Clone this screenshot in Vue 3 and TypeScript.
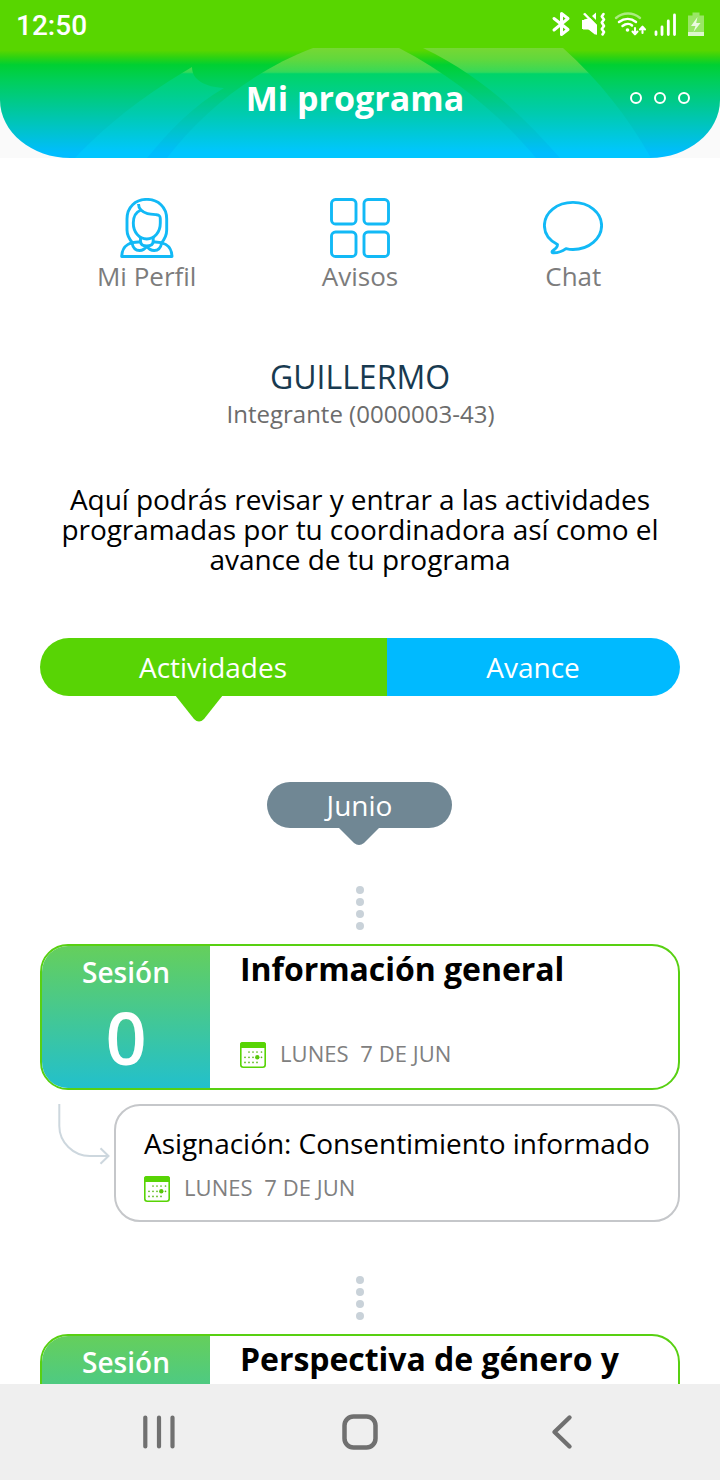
<script setup lang="ts">
interface Session { label: string; number: string; title: string; date: string; task?: string }

const sessions: Session[] = [
  { label: 'Sesión', number: '0', title: 'Información general', date: 'LUNES\u00a0 7 DE JUN', task: 'Asignación: Consentimiento informado' },
  { label: 'Sesión', number: '1', title: 'Perspectiva de género y', date: 'LUNES\u00a0 7 DE JUN' },
]
const dots = [0, 1, 2, 3]
const calendarDots = [
  [9, 10], [13, 10], [17, 10], [21.5, 10],
  [5, 15.3], [9, 15.3], [13, 15.3], [21.5, 15.3],
  [5, 20.4], [9, 20.4], [13, 20.4], [17, 20.4],
]
</script>

<template>
  <div class="screen">
    <header class="header">
      <svg class="header-art" width="720" height="158" viewBox="0 0 720 158">
        <defs>
          <linearGradient id="base" x1="0" y1="0" x2="0" y2="158" gradientUnits="userSpaceOnUse">
            <stop offset="0.32" stop-color="#58d600" />
            <stop offset="0.36" stop-color="#30d310" />
            <stop offset="0.41" stop-color="#00d032" />
            <stop offset="0.5" stop-color="#00cf56" />
            <stop offset="0.75" stop-color="#00c6b0" />
            <stop offset="0.97" stop-color="#00bdff" />
          </linearGradient>
          <linearGradient id="glow" x1="0" y1="48" x2="0" y2="158" gradientUnits="userSpaceOnUse">
            <stop offset="0" stop-color="#76d833" />
            <stop offset="0.1" stop-color="#62d83c" />
            <stop offset="0.2" stop-color="#3ed953" />
            <stop offset="0.22" stop-color="#30d95c" />
            <stop offset="0.235" stop-color="#00d468" />
            <stop offset="0.6" stop-color="#00cbb0" />
            <stop offset="0.95" stop-color="#00c6ff" />
          </linearGradient>
          <clipPath id="bar"><path d="M0 0H720V100C720 132 688 158 650 158H70C32 158 0 132 0 100Z" /></clipPath>
        </defs>
        <g clip-path="url(#bar)">
          <rect width="720" height="158" fill="url(#base)" />
          <path fill="url(#glow)" d="M75 158C112 119 150 92 192 67C192 80 205 87 224 88C193 106 170 130 147 158Z" />
          <path fill="url(#glow)" d="M167 158C202 112 254 70 313 48H399C455 77 502 117 536 158Z" />
          <path fill="url(#glow)" d="M423 48H563C599 80 628 117 651 158H560C518 110 477 74 423 48Z" />
        </g>
      </svg>
      <div class="status">
        <span class="clock">12:50</span>
        <svg class="status-icons" width="160" height="32" viewBox="550 8 160 32" fill="none" stroke="#fff" stroke-linecap="round" stroke-linejoin="round">
          <path stroke-width="3" d="M554 18.500L568 29.500L561.500 34.500V13.500L568 18.500L554 30" />
          <path fill="#fff" stroke="none" d="M582 20H586L595.500 29V35L588 29H582ZM583 14L585 12.800L597 25V28ZM592 16L596 12.500V20Z" />
          <path fill="#fff" stroke="none" d="M584 19.500L590 18L597 25V35L589 29.500H583Z" />
          <path stroke-width="2.600" d="M603.500 14L601.800 16.500L604 19.500L601.800 22.500L604 26L601.800 29L604 32L602.500 34.500" />
          <path stroke-width="2.4" stroke-opacity=".5" d="M616 18C623 12 633 12 640 18" />
          <path stroke-width="2.5" d="M619 22C624.500 18 631 18 636 22M622.500 26C626 23.500 630 23.500 632 25.500" />
          <circle cx="627.500" cy="30" r="1.800" fill="#fff" stroke="none" />
          <path stroke-width="2.100" d="M635 28V34M632.500 31.500L635 34.300L637.500 31.500M642.500 33V27M640 29.500L642.500 26.700L645 29.500" />
          <path stroke-width="2.800" d="M656 32V34.500M662 27V34.500M668.300 21V34.500M674.500 15V34.500" />
          <path fill="#fff" fill-opacity=".4" stroke="none" d="M692.500 12.500H699.500V15.500H704V32H688V15.500H692.500Z" />
          <path fill="#fff" fill-opacity=".8" stroke="none" d="M688 32H704V36H688ZM697.500 17L691 26H695.500L693.500 32L700.500 23H696.200Z" />
        </svg>
      </div>
      <div class="title-row">
        <h1>Mi programa</h1>
        <div class="more"><i v-for="n in 3" :key="n"></i></div>
      </div>
    </header>

    <main>
      <nav class="shortcuts">
        <a>
          <svg width="60" height="60" viewBox="0 0 60 60" fill="none" stroke="#12b9f6" stroke-width="2.900" stroke-linejoin="round">
            <path d="M16 45.500C12 41 10 37.500 10 32V21C10 9 18.500 1.400 29.800 1.400S49.700 9 49.700 21V32C49.700 37.500 48 41 44 45.500" />
            <path d="M24 12C19 14 16.300 18 16.300 25C16.300 34 22 41 29.800 41S43.300 34 43.300 25V21C43.300 18 42.500 17 39.500 16.700C33 16.200 28 16 24 12ZM24 12C22.500 10.500 21.500 9 21.500 6" />
            <path d="M23.500 39.500V43C23.500 46.500 26 48 29.800 48S36.200 46.500 36.200 43V39.500M23.500 44C15 43.500 5 46 4.700 58.500H55C54.700 46 44.700 43.500 36.200 44M15 45C16 50 19 52.500 22.500 52.500C25.500 52.500 28 51 29.800 48C31.600 51 34.200 52.500 37.200 52.500C40.700 52.500 43.700 50 44.700 45" />
          </svg>
          <span>Mi Perfil</span>
        </a>
        <a>
          <svg width="60" height="60" viewBox="0 0 60 60" fill="none" stroke="#12b9f6" stroke-width="2.900">
            <rect x="1.500" y="1.500" width="24.500" height="24.500" rx="4" /><rect x="34" y="1.500" width="24.500" height="24.500" rx="4" />
            <rect x="1.500" y="34" width="24.500" height="24.500" rx="4" /><rect x="34" y="34" width="24.500" height="24.500" rx="4" />
          </svg>
          <span>Avisos</span>
        </a>
        <a>
          <svg width="60" height="60" viewBox="0 0 60 60" fill="none" stroke="#12b9f6" stroke-width="2.900" stroke-linejoin="round">
            <path d="M14.500 46.500C6.500 42.500 1.400 35.500 1.400 27.500C1.400 14.500 14 4.400 30 4.400S58.600 14.500 58.600 27.500S46 51.500 30 51.500C27.500 51.500 25.500 51.200 23 50.600C19 53.500 14.500 55 10 54.800C8.500 54.700 9 53 10 52.500C12.500 51 14.500 49 14.500 46.500Z" />
          </svg>
          <span>Chat</span>
        </a>
      </nav>

      <h2>GUILLERMO</h2>
      <p class="member">Integrante (0000003-43)</p>
      <p class="intro">Aquí podrás revisar y entrar a las actividades<br>programadas por tu coordinadora así como el<br>avance de tu programa</p>

      <div class="tabs">
        <div class="tab active">Actividades
          <svg class="tab-pointer" width="48" height="27" viewBox="0 0 48 27"><path fill="#58d405" d="M0 0H48L29 24Q24 29 19 24Z" /></svg>
        </div>
        <div class="tab">Avance</div>
      </div>

      <div class="month">Junio
        <svg class="month-pointer" width="42" height="19" viewBox="0 0 42 19"><path fill="#708794" d="M0 0H42L26 16Q21 20 16 16Z" /></svg>
      </div>

      <section v-for="session in sessions" :key="session.number" class="session">
        <div class="dots"><i v-for="d in dots" :key="d"></i></div>
        <article class="card">
          <div class="badge">
            <span class="badge-label">{{ session.label }}</span>
            <span class="badge-number">{{ session.number }}</span>
          </div>
          <div class="info">
            <h3>{{ session.title }}</h3>
            <div class="date">
              <svg width="26" height="26" viewBox="0 0 26 26">
                <rect x=".8" y=".8" width="24.400" height="24.400" rx="2.500" fill="#fff" stroke="#58d405" stroke-width="1.600" />
                <path fill="#58d405" d="M0 6V2.500Q0 0 2.500 0H23.500Q26 0 26 2.500V6Z" />
                <circle v-for="(p, i) in calendarDots" :key="i" :cx="p[0]" :cy="p[1]" r=".85" fill="#58b816" />
                <circle cx="17.300" cy="15.300" r="2.200" fill="#58c80c" />
              </svg>
              <span>{{ session.date }}</span>
            </div>
          </div>
        </article>
        <div v-if="session.task" class="task-row">
          <svg class="branch" width="74" height="62" viewBox="0 0 74 62" fill="none" stroke="#cdd7de" stroke-width="2">
            <path d="M19.300 0V22C19.300 38 33 52 50 52H68M60.500 44.300L68.500 52L60.500 59.700" />
          </svg>
          <article class="task">
            <h4>{{ session.task }}</h4>
            <div class="date">
              <svg width="26" height="26" viewBox="0 0 26 26">
                <rect x=".8" y=".8" width="24.400" height="24.400" rx="2.500" fill="#fff" stroke="#58d405" stroke-width="1.600" />
                <path fill="#58d405" d="M0 6V2.500Q0 0 2.500 0H23.500Q26 0 26 2.500V6Z" />
                <circle v-for="(p, i) in calendarDots" :key="i" :cx="p[0]" :cy="p[1]" r=".85" fill="#58b816" />
                <circle cx="17.300" cy="15.300" r="2.200" fill="#58c80c" />
              </svg>
              <span>{{ session.date }}</span>
            </div>
          </article>
        </div>
      </section>
    </main>

    <footer class="system-nav">
      <svg width="720" height="96" viewBox="0 0 720 96" fill="none" stroke="#707070" stroke-linecap="round" stroke-linejoin="round">
        <path stroke-width="4.200" d="M145.300 33.500V62.500M159 33.500V62.500M172.500 33.500V62.500" />
        <rect x="344.500" y="32.500" width="31" height="31" rx="9" stroke-width="4.500" />
        <path stroke-width="4.400" d="M569.500 33.500L554.500 48L569.500 62.500" />
      </svg>
    </footer>
  </div>
</template>

<style>
html, body { margin: 0; overflow: hidden; }
</style>

<style scoped>
* { box-sizing: border-box; }
h1, h2, h3, h4, p { margin: 0; }
svg { display: block; flex: none; }
.screen { width: 720px; height: 1480px; display: flex; flex-direction: column; overflow: hidden; background: #fff; font-family: "Open Sans", "Noto Sans", sans-serif; color: #000; }
.header { position: relative; flex: none; height: 158px; background: #fafafa; color: #fff; }
.header-art { position: absolute; inset: 0; }
.status { position: relative; height: 48px; display: flex; justify-content: space-between; padding: 8px 10px 0 16px; }
.clock { font: 500 28px/35px Roboto, sans-serif; }
.title-row { position: relative; height: 100px; display: grid; grid-template-columns: 1fr auto 1fr; align-items: center; padding-right: 30px; padding-left: 20px; }
h1 { grid-column: 2; font-size: 34px; line-height: 46px; font-weight: 700; }
.more { display: flex; justify-content: flex-end; gap: 12px; }
.more i { width: 12px; height: 12px; border: 2px solid #fff; border-radius: 50%; }
main { flex: 1; min-height: 0; overflow: hidden; padding: 40px 40px 0; display: flex; flex-direction: column; }
main > * { flex: none; }
.shortcuts { display: grid; grid-template-columns: repeat(3, 1fr); justify-items: center; }
.shortcuts a { display: flex; flex-direction: column; align-items: center; font-size: 26px; line-height: 36px; color: #7c7c7c; }
h2 { margin-top: 61px; text-align: center; font-size: 32px; line-height: 44px; font-weight: 400; color: #183a50; }
.member { margin-top: -1px; text-align: center; font-size: 24px; line-height: 32px; color: #6c6c6c; padding-left: 1px; }
.intro { margin-top: 54px; text-align: center; font-size: 28px; line-height: 30px; letter-spacing: -0.06px; white-space: nowrap; }
.tabs { margin-top: 64px; height: 58px; display: grid; grid-template-columns: 347px 1fr; font-size: 28px; line-height: 58px; color: #fff; text-align: center; }
.tab { position: relative; background: #00baff; border-radius: 0 29px 29px 0; padding-right: 1px; }
.tab.active { background: #58d405; border-radius: 29px 0 0 29px; }
.tab-pointer { position: absolute; left: 135px; top: 57px; }
.month { position: relative; align-self: center; margin: 86px 1px 58px 0; width: 185px; height: 46px; border-radius: 23px; background: #708794; color: #fff; text-align: center; font-size: 28px; line-height: 46px; }
.month-pointer { position: absolute; left: 71px; top: 45px; }
.dots { height: 58px; display: flex; flex-direction: column; align-items: center; gap: 4px; }
.dots i { width: 8px; height: 8px; border-radius: 50%; background: #c9d2d9; }
.card { height: 146px; display: flex; border: 2px solid #58d012; border-radius: 28px; overflow: hidden; }
.badge { width: 168px; display: flex; flex-direction: column; align-items: center; color: #fff; font-weight: 600; background: linear-gradient(#65cf5c, #22c0cc); }
.badge-label { margin-top: 6px; font-size: 28px; line-height: 40px; }
.badge-number { margin-top: 5px; font-size: 72px; line-height: 80px; }
.info { padding-left: 30px; }
h3 { margin-top: 1px; font-size: 32px; line-height: 44px; white-space: nowrap; letter-spacing: -0.04px; }
.date { display: flex; align-items: center; gap: 14px; font-size: 22px; line-height: 26px; color: #808080; }
.info .date { margin-top: 51px; }
.date span { position: relative; top: -2px; white-space: pre; letter-spacing: 0.06px; }
.task-row { display: flex; margin: 14px 0 54px; }
.task { flex: 1; min-width: 0; height: 118px; border: 2px solid #c5c7ca; border-radius: 26px; padding: 17px 26px 0 28px; }
h4 { font-size: 28px; line-height: 40px; font-weight: 400; white-space: nowrap; letter-spacing: -0.05px; }
.task .date { margin-top: 13px; }
.system-nav { flex: none; height: 96px; background: #efefef; }
</style>
